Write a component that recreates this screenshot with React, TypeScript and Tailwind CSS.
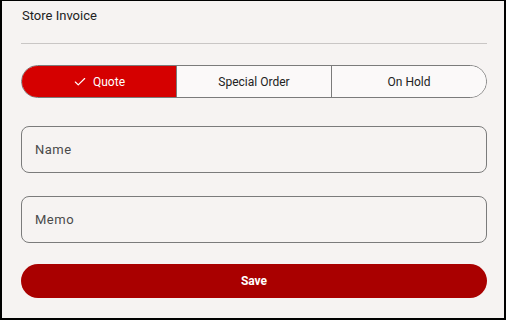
import { Check } from "lucide-react";

const segments = ["Quote", "Special Order", "On Hold"];

export default function App() {
  const active = 0;
  return (
    <div
      className="h-[320px] w-[506px] overflow-hidden border-2 border-t border-black bg-[#f6f3f2]"
      style={{ fontFamily: "Roboto, 'Noto Sans', sans-serif" }}
    >
      <div className="pl-[19px] pr-[17px]">
        <div className="pt-[6px] pl-[1px] text-[13px] leading-[18px] text-[#222]">
          Store Invoice
        </div>
        <div className="mt-[18px] h-px bg-[#c9c6c5]" />

        <div className="mt-[21px] flex h-[33px] overflow-hidden rounded-full border border-[#7b7b7b]">
          {segments.map((s, i) => (
            <div
              key={s}
              className={
                "flex flex-1 items-center justify-center gap-[6px] text-[12px] " +
                (i > 0 ? "border-l border-[#7b7b7b] " : "") +
                (i === active ? "bg-[#d50000] text-white" : "bg-[#fbf9f9] text-[#222]")
              }
            >
              {i === active && <Check size={14} strokeWidth={2} />}
              {s}
            </div>
          ))}
        </div>

        <div className="mt-[28px] flex h-[47px] items-center rounded-[8px] border border-[#7b7b7b] px-[13px] text-[13px] tracking-[0.5px] text-[#4a4a4a]">
          Name
        </div>
        <div className="mt-[23px] flex h-[47px] items-center rounded-[8px] border border-[#7b7b7b] px-[13px] text-[13px] tracking-[0.5px] text-[#4a4a4a]">
          Memo
        </div>

        <button className="mt-[21px] flex h-[34px] w-full items-center justify-center rounded-full bg-[#a90000] text-[12px] font-bold text-white">
          Save
        </button>
      </div>
    </div>
  );
}
